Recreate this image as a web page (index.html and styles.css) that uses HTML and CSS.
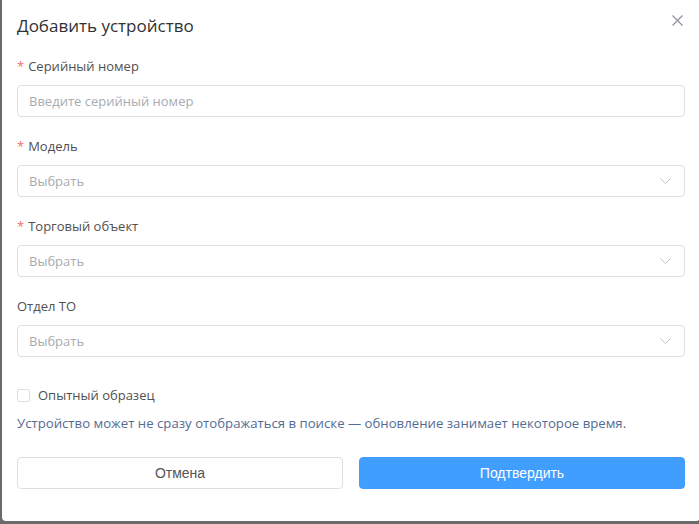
FILE: index.html
```html
<!DOCTYPE html>
<html lang="ru">
<head>
<meta charset="utf-8">
<title>Добавить устройство</title>
<link rel="stylesheet" href="styles.css">
</head>
<body>
<div class="dialog">
  <div class="dialog-header">
    <span class="dialog-title">Добавить устройство</span>
    <button class="close-btn" aria-label="Закрыть">
      <svg width="11" height="11" viewBox="0 0 11 11"><path d="M0.5 0.5 L10.5 10.5 M10.5 0.5 L0.5 10.5" stroke="#909399" stroke-width="1.2" fill="none"/></svg>
    </button>
  </div>
  <form class="form">
    <div class="field">
      <label class="label"><span class="req">*</span>Серийный номер</label>
      <div class="input"><span class="placeholder">Введите серийный номер</span></div>
    </div>
    <div class="field">
      <label class="label"><span class="req">*</span>Модель</label>
      <div class="input select"><span class="placeholder">Выбрать</span>
        <svg class="chev" width="11" height="6" viewBox="0 0 11 6"><path d="M0.5 0.5 L5.5 5.5 L10.5 0.5" stroke="#c0c4cc" stroke-width="1" fill="none"/></svg>
      </div>
    </div>
    <div class="field">
      <label class="label"><span class="req">*</span>Торговый объект</label>
      <div class="input select"><span class="placeholder">Выбрать</span>
        <svg class="chev" width="11" height="6" viewBox="0 0 11 6"><path d="M0.5 0.5 L5.5 5.5 L10.5 0.5" stroke="#c0c4cc" stroke-width="1" fill="none"/></svg>
      </div>
    </div>
    <div class="field">
      <label class="label">Отдел ТО</label>
      <div class="input select"><span class="placeholder">Выбрать</span>
        <svg class="chev" width="11" height="6" viewBox="0 0 11 6"><path d="M0.5 0.5 L5.5 5.5 L10.5 0.5" stroke="#c0c4cc" stroke-width="1" fill="none"/></svg>
      </div>
    </div>
    <label class="check-row"><span class="checkbox"></span><span class="check-label">Опытный образец</span></label>
    <p class="note">Устройство может не сразу отображаться в поиске — обновление занимает некоторое время.</p>
    <div class="actions">
      <button type="button" class="btn btn-cancel">Отмена</button>
      <button type="button" class="btn btn-primary">Подтвердить</button>
    </div>
  </form>
</div>
</body>
</html>
```
FILE: styles.css
```css
html, body {
  margin: 0;
  padding: 0;
  height: 100%;
  overflow: hidden;
  background: #6a6a6a;
}
body {
  font-family: "Open Sans", "Noto Sans", sans-serif;
}
.dialog {
  margin-left: 2px;
  width: 698px;
  height: 521px;
  box-sizing: border-box;
  background: #fff;
  border-radius: 0 0 4px 4px;
  padding: 14px 15px 0 15px;
}
.dialog-header {
  display: flex;
  justify-content: space-between;
  align-items: flex-start;
  height: 24px;
}
.dialog-title {
  font-size: 17px;
  line-height: 24px;
  color: #303133;
}
.close-btn {
  border: 0;
  background: none;
  padding: 0;
  margin: 1px 2px 0 0;
  width: 11px;
  height: 11px;
  display: flex;
}
.form {
  margin-top: 18px;
  display: flex;
  flex-direction: column;
}
.field {
  display: flex;
  flex-direction: column;
  margin-bottom: 19px;
}
.label {
  font-size: 13px;
  line-height: 20px;
  color: #505050;
  margin-bottom: 9px;
}
.req {
  color: #f56c6c;
  margin-right: 4px;
}
.input {
  height: 32px;
  box-sizing: border-box;
  border: 1px solid #dcdfe6;
  border-radius: 4px;
  display: flex;
  align-items: center;
  justify-content: space-between;
  padding: 0 12px 0 11px;
}
.placeholder {
  font-size: 13px;
  color: #a8abb2;
}
.chev {
  margin-right: 1px;
}
.check-row {
  display: flex;
  align-items: center;
  height: 20px;
  margin-top: 9px;
}
.checkbox {
  width: 13px;
  height: 13px;
  box-sizing: border-box;
  border: 1px solid #dcdfe6;
  border-radius: 2px;
  margin-right: 8px;
}
.check-label {
  font-size: 13px;
  color: #505050;
}
.note {
  margin: 8px 0 0 0;
  font-size: 13.2px;
  line-height: 20px;
  color: #546c92;
}
.actions {
  display: flex;
  gap: 16px;
  margin-top: 24px;
}
.btn {
  flex: 1;
  height: 32px;
  border-radius: 4px;
  font-family: "Liberation Sans", Arial, sans-serif;
  font-size: 14px;
  cursor: pointer;
}
.btn-cancel {
  background: #fff;
  border: 1px solid #dcdfe6;
  color: #555;
}
.btn-primary {
  background: #409eff;
  border: 1px solid #409eff;
  color: #fff;
}
```
